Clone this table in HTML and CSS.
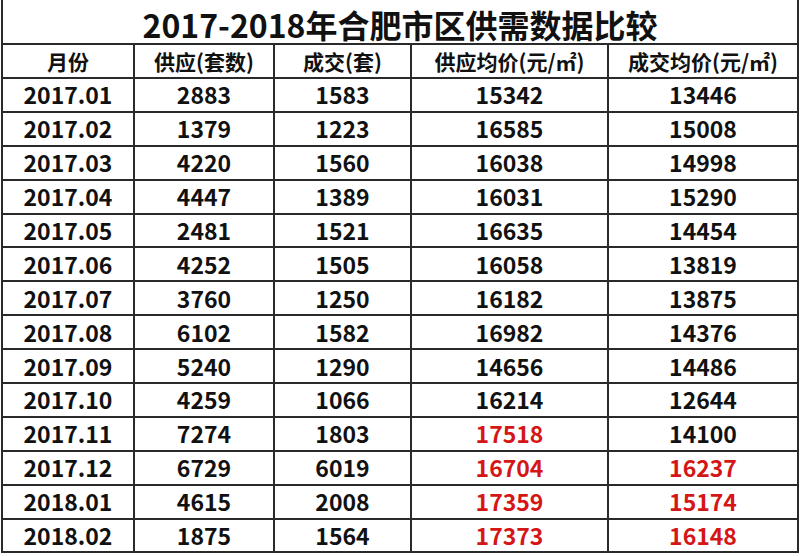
FILE: index.html
```html
<!DOCTYPE html>
<html lang="zh-CN">
<head>
<meta charset="utf-8">
<link rel="stylesheet" href="styles.css">
</head>
<body>
<table class="sheet">
  <colgroup>
    <col class="c1"><col class="c2"><col class="c3"><col class="c4"><col class="c5">
  </colgroup>
  <tr class="title-row"><td colspan="5">2017-2018年合肥市区供需数据比较</td></tr>
  <tr class="head-row"><td>月份</td><td>供应(套数)</td><td>成交(套)</td><td>供应均价(元/㎡)</td><td>成交均价(元/㎡)</td></tr>
  <tr><td>2017.01</td><td>2883</td><td>1583</td><td>15342</td><td>13446</td></tr>
  <tr><td>2017.02</td><td>1379</td><td>1223</td><td>16585</td><td>15008</td></tr>
  <tr><td>2017.03</td><td>4220</td><td>1560</td><td>16038</td><td>14998</td></tr>
  <tr><td>2017.04</td><td>4447</td><td>1389</td><td>16031</td><td>15290</td></tr>
  <tr><td>2017.05</td><td>2481</td><td>1521</td><td>16635</td><td>14454</td></tr>
  <tr><td>2017.06</td><td>4252</td><td>1505</td><td>16058</td><td>13819</td></tr>
  <tr><td>2017.07</td><td>3760</td><td>1250</td><td>16182</td><td>13875</td></tr>
  <tr><td>2017.08</td><td>6102</td><td>1582</td><td>16982</td><td>14376</td></tr>
  <tr><td>2017.09</td><td>5240</td><td>1290</td><td>14656</td><td>14486</td></tr>
  <tr><td>2017.10</td><td>4259</td><td>1066</td><td>16214</td><td>12644</td></tr>
  <tr><td>2017.11</td><td>7274</td><td>1803</td><td class="hi">17518</td><td>14100</td></tr>
  <tr><td>2017.12</td><td>6729</td><td>6019</td><td class="hi">16704</td><td class="hi">16237</td></tr>
  <tr><td>2018.01</td><td>4615</td><td>2008</td><td class="hi">17359</td><td class="hi">15174</td></tr>
  <tr><td>2018.02</td><td>1875</td><td>1564</td><td class="hi">17373</td><td class="hi">16148</td></tr>
</table>
</body>
</html>
```
FILE: styles.css
```css
html, body {
  margin: 0;
  padding: 0;
  background: #fff;
}
body {
  padding-left: 1px;
}
.sheet {
  border-collapse: collapse;
  table-layout: fixed;
  width: 796px;
  font-family: "Noto Sans CJK SC", "Microsoft YaHei", sans-serif;
  font-weight: bold;
  color: #111;
}
.c1 { width: 132px; }
.c2 { width: 140px; }
.c3 { width: 137px; }
.c4 { width: 197px; }
.c5 { width: 190px; }
.sheet td {
  border: 2px solid #2a2a2a;
  text-align: center;
  padding: 0;
  height: 31.9px;
  font-size: 23px;
  line-height: 1;
}
.sheet .title-row td {
  border-top: none;
  height: 44px;
  font-size: 32px;
  line-height: 1;
  padding-top: 4px;
  box-sizing: border-box;
}
.sheet .head-row td {
  height: 32px;
  font-size: 21px;
}
.sheet td.hi {
  color: #d41616;
}
```
